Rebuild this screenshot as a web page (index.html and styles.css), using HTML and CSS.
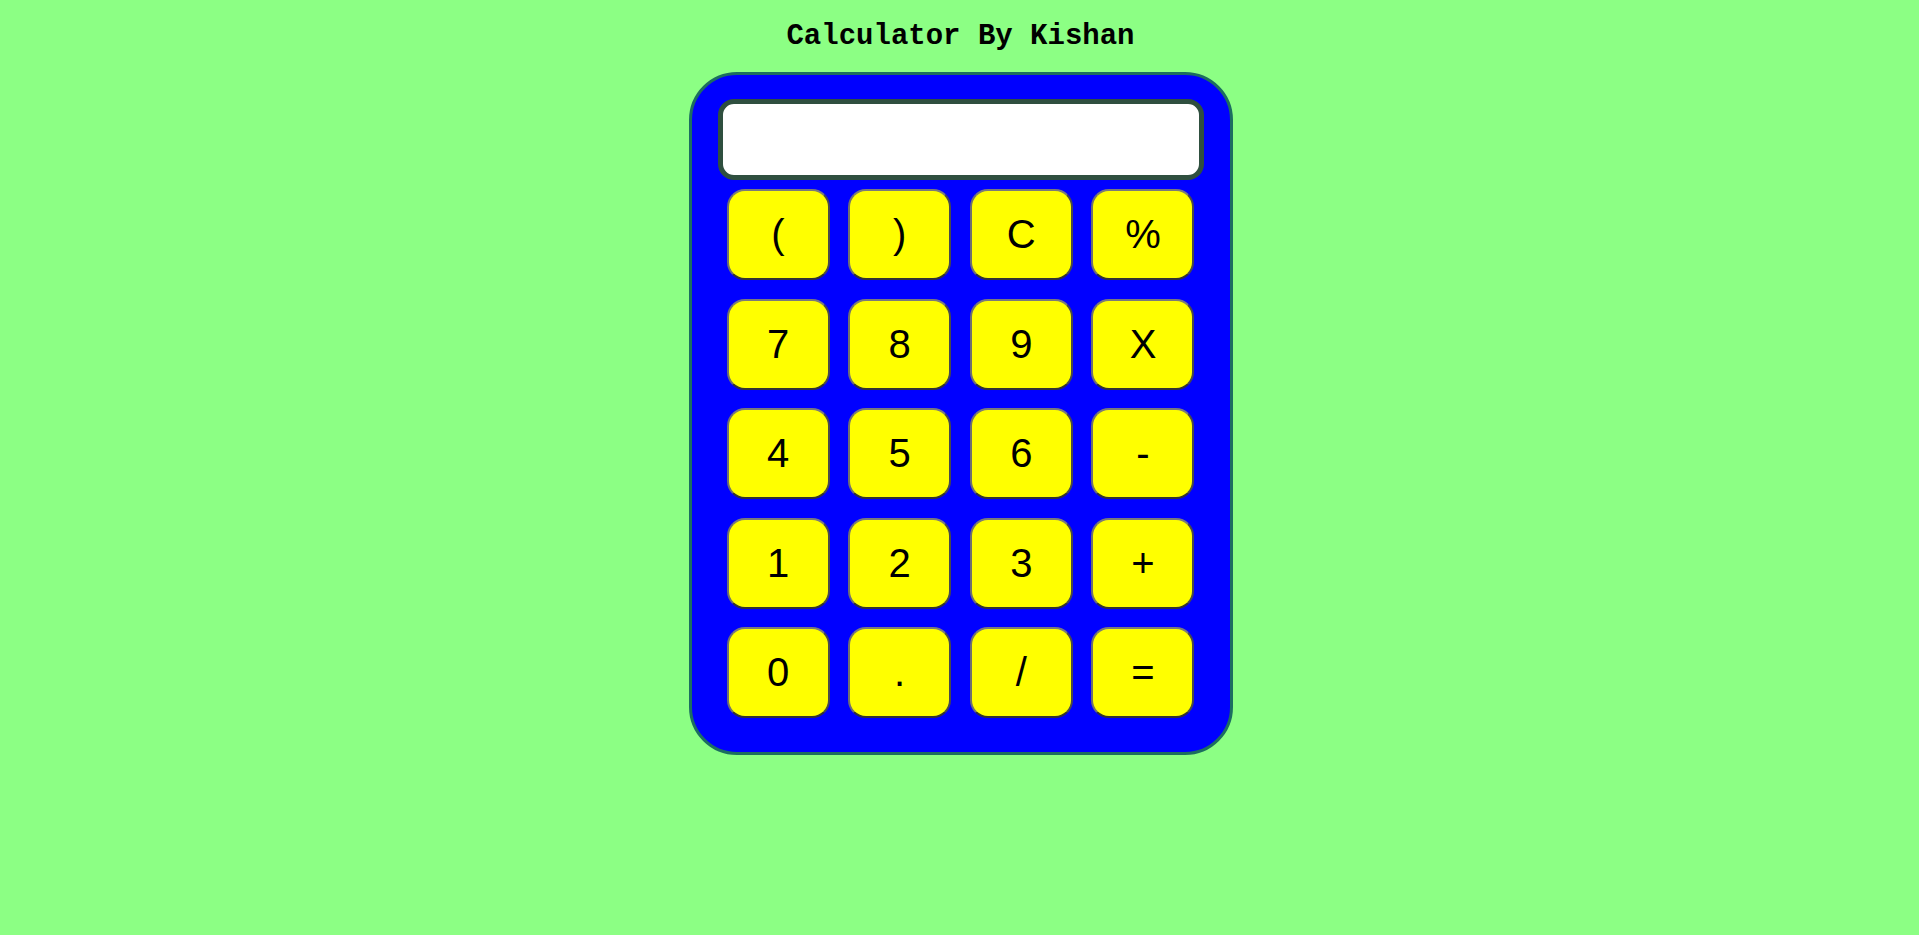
FILE: index.html
```html
<!DOCTYPE html>
<html lang="en">
<head>
<meta charset="utf-8">
<title>Calculator By Kishan</title>
<link rel="stylesheet" href="styles.css">
</head>
<body>
<h1 class="title">Calculator By Kishan</h1>
<div class="calc">
  <input class="display" type="text" readonly>
  <div class="keys">
    <button class="key">(</button>
    <button class="key">)</button>
    <button class="key">C</button>
    <button class="key">%</button>
    <button class="key">7</button>
    <button class="key">8</button>
    <button class="key">9</button>
    <button class="key">X</button>
    <button class="key">4</button>
    <button class="key">5</button>
    <button class="key">6</button>
    <button class="key">-</button>
    <button class="key">1</button>
    <button class="key">2</button>
    <button class="key">3</button>
    <button class="key">+</button>
    <button class="key">0</button>
    <button class="key">.</button>
    <button class="key">/</button>
    <button class="key">=</button>
  </div>
</div>
</body>
</html>
```
FILE: styles.css
```css
html, body {
  margin: 0;
  padding: 0;
}
body {
  background: #8cff84;
  display: flex;
  flex-direction: column;
  align-items: center;
  padding-left: 2px;
}
.title {
  font-family: "Liberation Mono", "Courier New", monospace;
  font-weight: bold;
  font-size: 29px;
  line-height: 33px;
  margin: 20px 0 19px;
  color: #000;
}
.calc {
  box-sizing: border-box;
  width: 544px;
  border: 3px solid #1c6e60;
  border-radius: 48px;
  background: #0000ff;
  padding: 24px 26px 34px;
  display: flex;
  flex-direction: column;
}
.display {
  box-sizing: border-box;
  width: 486px;
  height: 81px;
  border: 5px solid #2f4f3f;
  border-radius: 16px;
  background: #fff;
  margin: 0;
  outline: none;
}
.keys {
  margin-top: 9px;
  padding: 0 9px;
  display: grid;
  grid-template-columns: repeat(4, 103px);
  grid-auto-rows: 91px;
  column-gap: 18.67px;
  row-gap: 18.5px;
}
.key {
  box-sizing: border-box;
  margin: 0;
  padding: 0;
  background: #ffff00;
  border: 2px solid;
  border-color: #7a7a7a #4a4a4a #333333 #707070;
  border-radius: 18px;
  font-family: "Liberation Sans", Arial, sans-serif;
  font-size: 40px;
  color: #000;
  display: flex;
  align-items: center;
  justify-content: center;
}
```
